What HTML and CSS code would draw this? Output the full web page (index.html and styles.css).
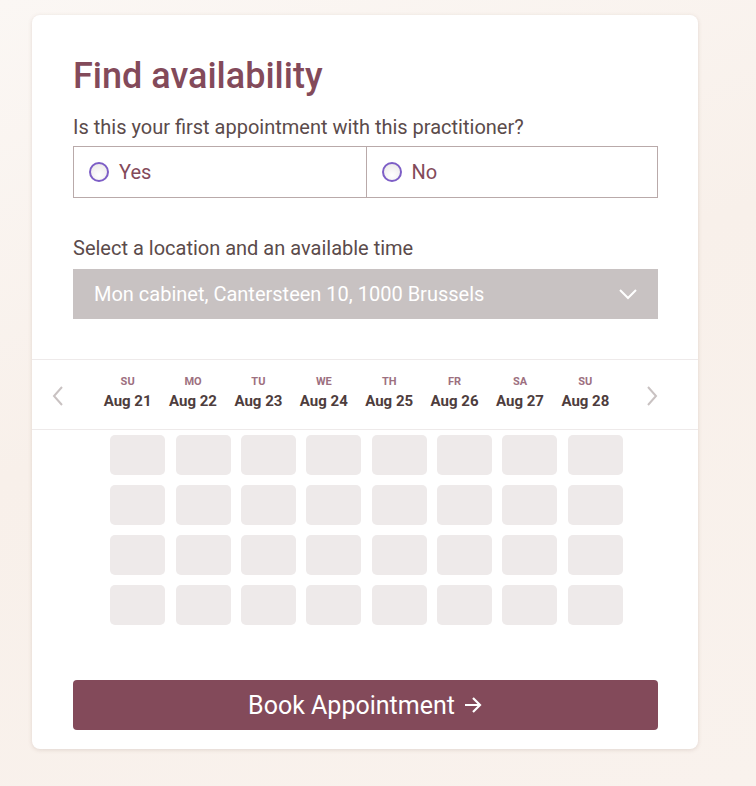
FILE: index.html
```html
<!DOCTYPE html>
<html>
<head>
<meta charset="utf-8">
<link rel="stylesheet" href="styles.css">
</head>
<body>
<div class="page">
  <div class="card">
    <div class="inner">
      <h1 class="title">Find availability</h1>
      <p class="label q">Is this your first appointment with this practitioner?</p>
      <div class="choice">
        <label class="opt"><span class="radio"></span><span>Yes</span></label>
        <label class="opt"><span class="radio"></span><span>No</span></label>
      </div>
      <p class="label sel">Select a location and an available time</p>
      <div class="dropdown">
        <span>Mon cabinet, Cantersteen 10, 1000 Brussels</span>
        <svg class="chev" width="20" height="12" viewBox="0 0 20 12"><path d="M2 2 L10 10 L18 2" fill="none" stroke="#fff" stroke-width="2"/></svg>
      </div>
    </div>
    <div class="week">
      <svg class="arrow" width="14" height="22" viewBox="0 0 14 22"><path d="M11 2 L3 11 L11 20" fill="none" stroke="#c9c2c2" stroke-width="2"/></svg>
      <div class="days">
        <div class="day"><span class="dn">SU</span><span class="dd">Aug 21</span></div>
        <div class="day"><span class="dn">MO</span><span class="dd">Aug 22</span></div>
        <div class="day"><span class="dn">TU</span><span class="dd">Aug 23</span></div>
        <div class="day"><span class="dn">WE</span><span class="dd">Aug 24</span></div>
        <div class="day"><span class="dn">TH</span><span class="dd">Aug 25</span></div>
        <div class="day"><span class="dn">FR</span><span class="dd">Aug 26</span></div>
        <div class="day"><span class="dn">SA</span><span class="dd">Aug 27</span></div>
        <div class="day"><span class="dn">SU</span><span class="dd">Aug 28</span></div>
      </div>
      <svg class="arrow" width="14" height="22" viewBox="0 0 14 22"><path d="M3 2 L11 11 L3 20" fill="none" stroke="#c9c2c2" stroke-width="2"/></svg>
    </div>
    <div class="slots">
      <div class="slot"></div><div class="slot"></div><div class="slot"></div><div class="slot"></div><div class="slot"></div><div class="slot"></div><div class="slot"></div><div class="slot"></div>
      <div class="slot"></div><div class="slot"></div><div class="slot"></div><div class="slot"></div><div class="slot"></div><div class="slot"></div><div class="slot"></div><div class="slot"></div>
      <div class="slot"></div><div class="slot"></div><div class="slot"></div><div class="slot"></div><div class="slot"></div><div class="slot"></div><div class="slot"></div><div class="slot"></div>
      <div class="slot"></div><div class="slot"></div><div class="slot"></div><div class="slot"></div><div class="slot"></div><div class="slot"></div><div class="slot"></div><div class="slot"></div>
    </div>
    <div class="inner foot">
      <button class="book">Book Appointment <svg width="20" height="18" viewBox="0 0 20 18"><path d="M2 9 H17 M10 2 L17 9 L10 16" fill="none" stroke="#fff" stroke-width="2.2"/></svg></button>
    </div>
  </div>
</div>
</body>
</html>
```
FILE: styles.css
```css
* { box-sizing: border-box; }
html, body { margin: 0; height: 100%; }
body {
  font-family: Roboto, "Noto Sans", sans-serif;
  background: linear-gradient(160deg, #fbf7f4 0%, #f8f0ea 45%, #f9f2ed 100%);
  overflow: hidden;
}
.page { padding: 15px 0 0 32px; }
.card {
  width: 666px;
  height: 734px;
  background: #fff;
  border-radius: 8px;
  box-shadow: 0 1px 4px rgba(120, 90, 80, 0.18);
  display: flex;
  flex-direction: column;
}
.inner { padding: 0 40px 0 41px; }
.title {
  margin: 0;
  padding-top: 42px;
  font-size: 36px;
  line-height: 38px;
  font-weight: 500;
  color: #834a5a;
}
.label {
  margin: 0;
  font-size: 20px;
  line-height: 24px;
  color: #5b4b4b;
}
.q { margin-top: 20px; }
.choice {
  margin-top: 7px;
  display: grid;
  grid-template-columns: 1fr 1fr;
  border: 1px solid #b9aaaa;
  height: 52px;
}
.opt {
  display: flex;
  align-items: center;
  padding-left: 15px;
  gap: 10px;
  font-size: 20px;
  color: #834a5a;
}
.opt + .opt { border-left: 1px solid #b9aaaa; }
.radio {
  width: 20px;
  height: 20px;
  border-radius: 50%;
  border: 2px solid #7d5ec6;
  background: radial-gradient(circle at 50% 70%, #fff 0%, #e9e6e6 100%);
}
.sel { margin-top: 38px; }
.dropdown {
  margin-top: 9px;
  height: 50px;
  background: #c8c2c2;
  color: #fff;
  font-size: 20px;
  display: flex;
  align-items: center;
  justify-content: space-between;
  padding: 0 20px 0 21px;
}
.week {
  margin-top: 40px;
  border-top: 1px solid #eeeaea;
  border-bottom: 1px solid #eeeaea;
  height: 71px;
  display: flex;
  align-items: center;
  justify-content: space-between;
  padding: 0 39px 4px 19px;
}
.arrow { margin-top: 6px; }
.days {
  display: grid;
  grid-template-columns: repeat(8, 55px);
  column-gap: 10.4px;
  margin-left: 3px;
}
.day {
  display: flex;
  flex-direction: column;
  align-items: center;
}
.dn {
  font-size: 11px;
  font-weight: 700;
  color: #9d7080;
  line-height: 14px;
}
.dd {
  margin-top: 3px;
  font-size: 15px;
  font-weight: 700;
  color: #4e3d3d;
  line-height: 18px;
  white-space: nowrap;
}
.slots {
  margin-top: 5px;
  align-self: center;
  display: grid;
  grid-template-columns: repeat(8, 55px);
  grid-auto-rows: 40px;
  gap: 10px 10.4px;
  margin-left: 3px;
}
.slot {
  background: #eeeaea;
  border-radius: 5px;
}
.foot { margin-top: 55px; }
.book {
  width: 100%;
  height: 50px;
  border: 0;
  border-radius: 4px;
  background: #834a5a;
  color: #fff;
  font-family: Roboto, "Noto Sans", sans-serif;
  font-size: 25px;
  display: flex;
  align-items: center;
  justify-content: center;
  gap: 8px;
}
```
